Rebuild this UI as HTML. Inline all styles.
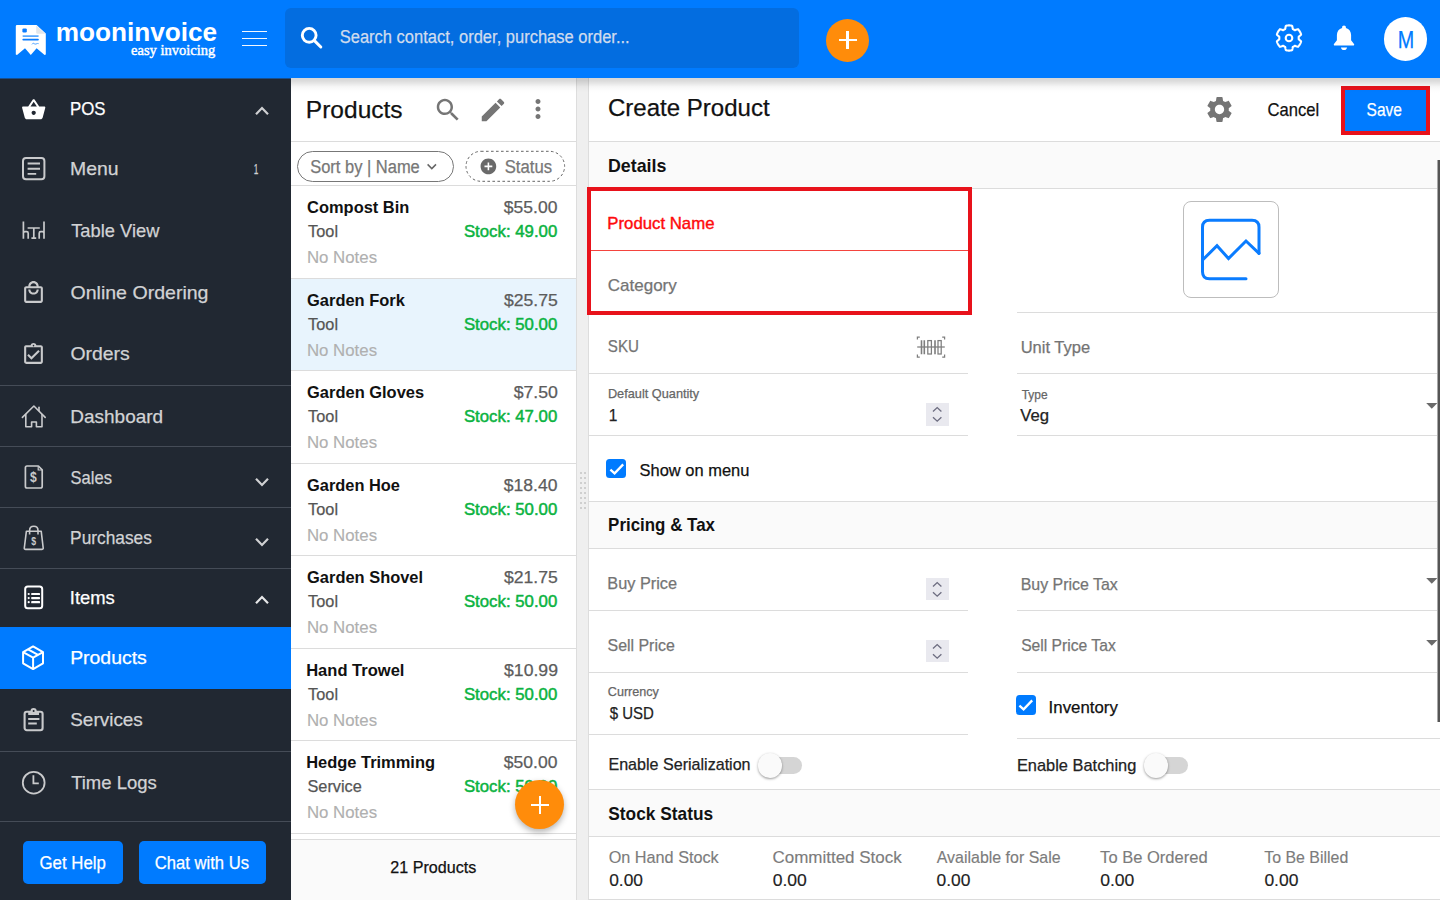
<!DOCTYPE html>
<html lang="en"><head><meta charset="utf-8"><title>Moon Invoice - Create Product</title>
<style>
html,body{margin:0;padding:0;background:#fff;}
body{width:1440px;height:900px;overflow:hidden;position:relative;font-family:'Liberation Sans',sans-serif;}
#app{position:absolute;left:0;top:0;width:1440px;height:900px;overflow:hidden;}
.t{position:absolute;white-space:nowrap;transform-origin:0 0;line-height:1;-webkit-text-stroke-width:.25px;}
</style></head><body><div id="app">
<div style="position:absolute;left:0px;top:78px;width:291px;height:822px;background:#212832"></div>
<div style="position:absolute;left:0px;top:385px;width:291px;height:1px;background:#454c57"></div>
<div style="position:absolute;left:0px;top:446px;width:291px;height:1px;background:#454c57"></div>
<div style="position:absolute;left:0px;top:507px;width:291px;height:1px;background:#454c57"></div>
<div style="position:absolute;left:0px;top:568px;width:291px;height:1px;background:#454c57"></div>
<div style="position:absolute;left:0px;top:751px;width:291px;height:1px;background:#454c57"></div>
<div style="position:absolute;left:0px;top:821px;width:291px;height:1px;background:#454c57"></div>
<div style="position:absolute;left:0px;top:627px;width:291px;height:62px;background:#007bff"></div>
<svg style="position:absolute;left:21.000000000000004px;top:96.5px;" width="25.4" height="25.4" viewBox="0 0 24 24"><path fill="#fff" d="M17.21 9l-4.38-6.56c-.19-.28-.51-.42-.83-.42-.32 0-.64.14-.83.43L6.79 9H2c-.55 0-1 .45-1 1 0 .09.01.18.04.27l2.54 9.27c.23.84 1 1.46 1.92 1.46h13c.92 0 1.69-.62 1.93-1.46l2.54-9.27L23 10c0-.55-.45-1-1-1h-4.79zM9 9l3-4.4L15 9H9zm3 8c-1.1 0-2-.9-2-2s.9-2 2-2 2 .9 2 2-.9 2-2 2z"/></svg>
<span class="t" style="left:69px;top:99px;font:400 19px/1 'Liberation Sans',sans-serif;color:#fff;transform:translateX(0.97px) scaleX(0.8867);">POS</span>
<svg style="position:absolute;left:252px;top:101.2px;" width="20" height="20" viewBox="-10 -10 20 20"><path d="M-6 3.2 L0 -3 L6 3.2" fill="none" stroke="#d0d1d3" stroke-width="2.2"/></svg>
<svg style="position:absolute;left:20px;top:155px;" width="28" height="28" viewBox="0 0 28 28"><rect x="3" y="3" width="21.4" height="21.2" rx="3" fill="none" stroke="#c9cacc" stroke-width="2"/><path d="M7.6 8.5 H20 M7.6 13.7 H20 M7.6 18.9 H16.2" stroke="#c9cacc" stroke-width="1.9"/></svg>
<span class="t" style="left:70px;top:159px;font:400 19px/1 'Liberation Sans',sans-serif;color:#d2d3d5;transform:translateX(0.07px) scaleX(1.0216);">Menu</span>
<span class="t" style="left:253px;top:162px;font:400 14px/1 'Liberation Sans',sans-serif;color:#d2d3d5;transform:translateX(0.67px) scaleX(0.5913);">1</span>
<svg style="position:absolute;left:20px;top:218px;" width="28" height="24" viewBox="0 0 28 24"><g fill="none" stroke="#c9cacc" stroke-width="1.7"><path d="M3.4 3.6 V20.8 M3.4 15 Q3.4 13.6 5 13.6 H6.6 Q8.2 13.6 8.2 15.2 V20.8"/><path d="M24 3.6 V20.8 M24 15 Q24 13.6 22.4 13.6 H20.8 Q19.2 13.6 19.2 15.2 V20.8"/><path d="M7.6 10 H19.8 M13.8 10 V20 M11.4 20.2 H16.2"/></g></svg>
<span class="t" style="left:71px;top:221px;font:400 19px/1 'Liberation Sans',sans-serif;color:#d2d3d5;transform:translateX(0.19px) scaleX(0.9640);">Table View</span>
<svg style="position:absolute;left:21.1px;top:279.5px;" width="25" height="25" viewBox="0 0 24 24"><path fill="#c9cacc" d="M19 6h-2c0-2.76-2.24-5-5-5S7 3.24 7 6H5c-1.1 0-2 .9-2 2v12c0 1.1.9 2 2 2h14c1.1 0 2-.9 2-2V8c0-1.1-.9-2-2-2zm-7-3c1.66 0 3 1.34 3 3H9c0-1.66 1.34-3 3-3zm7 17H5V8h14v12zm-7-8c-1.66 0-3-1.34-3-3H7c0 2.76 2.24 5 5 5s5-2.24 5-5h-2c0 1.66-1.34 3-3 3z"/></svg>
<span class="t" style="left:70px;top:283px;font:400 19px/1 'Liberation Sans',sans-serif;color:#d2d3d5;transform:translateX(0.46px) scaleX(1.0292);">Online Ordering</span>
<svg style="position:absolute;left:21.1px;top:341.5px;" width="25" height="25" viewBox="0 0 24 24"><path fill="#c9cacc" d="M18 9l-1.41-1.42L10 14.17l-2.59-2.58L6 13l4 4zm1-6h-4.18C14.4 1.84 13.3 1 12 1c-1.3 0-2.4.84-2.82 2H5c-.14 0-.27.01-.4.04-.39.08-.74.28-1.01.55-.18.18-.33.4-.43.64-.1.23-.16.49-.16.77v14c0 .27.06.54.16.78s.25.45.43.64c.27.27.62.47 1.01.55.13.02.26.03.4.03h14c1.1 0 2-.9 2-2V5c0-1.1-.9-2-2-2zm-7-.25c.41 0 .75.34.75.75s-.34.75-.75.75-.75-.34-.75-.75.34-.75.75-.75zM19 19H5V5h14v14z"/></svg>
<span class="t" style="left:70px;top:344px;font:400 19px/1 'Liberation Sans',sans-serif;color:#d2d3d5;transform:translateX(0.46px) scaleX(1.0216);">Orders</span>
<svg style="position:absolute;left:20px;top:402px;" width="28" height="28" viewBox="0 0 28 28"><g fill="none" stroke="#c9cacc" stroke-width="1.6" stroke-linejoin="round" stroke-linecap="round"><path d="M2.4 15.4 L13.9 4 L25.2 15.4"/><path d="M5.8 12.6 V24.8 H11.6 V20 H16.4 V24.8 H22 V12.6"/><path d="M19 5.2 V8.6"/></g></svg>
<span class="t" style="left:70px;top:407px;font:400 19px/1 'Liberation Sans',sans-serif;color:#d2d3d5;transform:translateX(0.25px) scaleX(0.9994);">Dashboard</span>
<svg style="position:absolute;left:20px;top:462px;" width="28" height="30" viewBox="0 0 28 30"><path d="M7 4 H18.4 L22.2 7.8 V24.2 Q22.2 26 20.4 26 H7 Q5.4 26 5.4 24.2 V5.8 Q5.4 4 7 4Z" fill="none" stroke="#c9cacc" stroke-width="1.7" stroke-linejoin="round"/><path d="M18.2 4.2 V8 H22" fill="none" stroke="#c9cacc" stroke-width="1.2"/></svg>
<span class="t" style="left:30px;top:470px;font:700 14.5px/1 'Liberation Sans',sans-serif;color:#c9cacc;transform:translateX(0.04px) scaleX(0.8344);-webkit-text-stroke-width:0;">$</span>
<span class="t" style="left:70px;top:468px;font:400 19px/1 'Liberation Sans',sans-serif;color:#d2d3d5;transform:translateX(0.52px) scaleX(0.8714);">Sales</span>
<svg style="position:absolute;left:252px;top:471.6px;" width="20" height="20" viewBox="-10 -10 20 20"><path d="M-6 -3.2 L0 3 L6 -3.2" fill="none" stroke="#d0d1d3" stroke-width="2.2"/></svg>
<svg style="position:absolute;left:20px;top:522px;" width="28" height="30" viewBox="0 0 28 30"><g fill="none" stroke="#c9cacc" stroke-width="1.6" stroke-linejoin="round"><path d="M6.4 9.2 H21.2 L23.2 26 Q23.3 27.4 21.8 27.4 H5.6 Q4.2 27.4 4.3 26Z"/><path d="M9.6 12.6 V8.4 Q9.6 4.2 13.8 4.2 Q18 4.2 18 8.4 V12.6"/></g></svg>
<span class="t" style="left:31px;top:536px;font:700 11px/1 'Liberation Sans',sans-serif;color:#c9cacc;transform:translateX(0.33px) scaleX(0.7894);-webkit-text-stroke-width:0;">$</span>
<span class="t" style="left:70px;top:528px;font:400 19px/1 'Liberation Sans',sans-serif;color:#d2d3d5;transform:translateX(0.09px) scaleX(0.9110);">Purchases</span>
<svg style="position:absolute;left:252px;top:532px;" width="20" height="20" viewBox="-10 -10 20 20"><path d="M-6 -3.2 L0 3 L6 -3.2" fill="none" stroke="#d0d1d3" stroke-width="2.2"/></svg>
<svg style="position:absolute;left:20px;top:582px;" width="28" height="30" viewBox="0 0 28 30"><rect x="5.2" y="4.5" width="17" height="21.8" rx="2.6" fill="none" stroke="#fff" stroke-width="2"/><g fill="#fff"><rect x="11.2" y="10.9" width="8.8" height="2.2" rx=".6"/><rect x="11.2" y="15" width="8.8" height="2.2" rx=".6"/><rect x="11.2" y="19.1" width="8.8" height="2.2" rx=".6"/><circle cx="8.7" cy="12" r="1.1"/><circle cx="8.7" cy="16.1" r="1.1"/><circle cx="8.7" cy="20.2" r="1.1"/></g></svg>
<span class="t" style="left:69px;top:588px;font:400 19px/1 'Liberation Sans',sans-serif;color:#fff;transform:translateX(0.77px) scaleX(0.9690);">Items</span>
<svg style="position:absolute;left:252px;top:589.6px;" width="20" height="20" viewBox="-10 -10 20 20"><path d="M-6 3.2 L0 -3 L6 3.2" fill="none" stroke="#e6e7e8" stroke-width="2.2"/></svg>
<svg style="position:absolute;left:19px;top:643px;" width="28" height="30" viewBox="0 0 28 30"><g fill="none" stroke="#fff" stroke-width="2" stroke-linejoin="round"><path d="M14.1 3.4 L24 9.2 V20.3 L14.1 26.1 L4.1 20.3 V9.2Z"/><path d="M4.1 9.2 L14.1 14.6 L24 9.2 M14.1 14.6 V26.1"/><path d="M9.1 6.3 L19 11.9"/></g></svg>
<span class="t" style="left:70px;top:648px;font:400 19px/1 'Liberation Sans',sans-serif;color:#fff;transform:translateX(0.16px) scaleX(1.0214);">Products</span>
<svg style="position:absolute;left:20px;top:706px;" width="28" height="28" viewBox="0 0 28 28"><rect x="4.6" y="5.8" width="18" height="18.4" rx="2.2" fill="none" stroke="#c9cacc" stroke-width="2.1"/><rect x="8.2" y="5" width="10.8" height="4" fill="#c9cacc"/><circle cx="13.6" cy="5.2" r="3.1" fill="#c9cacc"/><circle cx="13.6" cy="5" r="1" fill="#212832"/><path d="M8.2 12.9 H19.4 M8.2 17.5 H16.8" stroke="#c9cacc" stroke-width="2"/></svg>
<span class="t" style="left:70px;top:710px;font:400 19px/1 'Liberation Sans',sans-serif;color:#d2d3d5;transform:translateX(0.24px) scaleX(0.9965);">Services</span>
<svg style="position:absolute;left:20px;top:769px;" width="28" height="28" viewBox="0 0 28 28"><circle cx="13.7" cy="13.7" r="10.9" fill="none" stroke="#c9cacc" stroke-width="1.8"/><path d="M13.4 6.2 V14.4 H18.8" fill="none" stroke="#c9cacc" stroke-width="1.8"/></svg>
<span class="t" style="left:71px;top:773px;font:400 19px/1 'Liberation Sans',sans-serif;color:#d2d3d5;transform:translateX(0.15px) scaleX(0.9736);">Time Logs</span>
<div style="position:absolute;left:22.5px;top:841.3px;width:100px;height:43px;background:#007bff;border-radius:5px"></div>
<span class="t" style="left:39px;top:853px;font:400 19px/1 'Liberation Sans',sans-serif;color:#fff;transform:translateX(0.46px) scaleX(0.8862);">Get Help</span>
<div style="position:absolute;left:139.2px;top:841.3px;width:126.5px;height:43px;background:#007bff;border-radius:5px"></div>
<span class="t" style="left:154px;top:853px;font:400 19px/1 'Liberation Sans',sans-serif;color:#fff;transform:translateX(0.82px) scaleX(0.8739);">Chat with Us</span>
<div style="position:absolute;left:291px;top:78px;width:285px;height:822px;background:#fff"></div>
<span class="t" style="left:305px;top:98px;font:400 24.5px/1 'Liberation Sans',sans-serif;color:#111;transform:translateX(0.82px) scaleX(1.0014);">Products</span>
<svg style="position:absolute;left:432.5px;top:94.8px;" width="30" height="30" viewBox="0 0 24 24"><path fill="#757575" d="M15.5 14h-.79l-.28-.27C15.41 12.59 16 11.11 16 9.5 16 5.91 13.09 3 9.5 3S3 5.91 3 9.5 5.91 16 9.5 16c1.61 0 3.09-.59 4.23-1.57l.27.28v.79l5 4.99L20.49 19l-4.99-5zm-6 0C7.01 14 5 11.99 5 9.5S7.01 5 9.5 5 14 7.01 14 9.5 11.99 14 9.5 14z"/></svg>
<svg style="position:absolute;left:478.0px;top:94.6px;" width="30" height="30" viewBox="0 0 24 24"><path fill="#757575" d="M3 17.25V21h3.75L17.81 9.94l-3.75-3.75L3 17.25zM20.71 7.04c.39-.39.39-1.02 0-1.41l-2.34-2.34c-.39-.39-1.02-.39-1.41 0l-1.83 1.83 3.75 3.75 1.83-1.83z"/></svg>
<svg style="position:absolute;left:523.2px;top:94.4px;" width="30" height="30" viewBox="0 0 24 24"><path fill="#757575" d="M12 8c1.1 0 2-.9 2-2s-.9-2-2-2-2 .9-2 2 .9 2 2 2zm0 2c-1.1 0-2 .9-2 2s.9 2 2 2 2-.9 2-2-.9-2-2-2zm0 6c-1.1 0-2 .9-2 2s.9 2 2 2 2-.9 2-2-.9-2-2-2z"/></svg>
<div style="position:absolute;left:291px;top:141px;width:285px;height:1px;background:#dcdcdc"></div>
<div style="position:absolute;left:296.8px;top:150.8px;width:157px;height:31px;border:1px solid #777;border-radius:16px;box-sizing:border-box"></div>
<span class="t" style="left:310px;top:158px;font:400 18px/1 'Liberation Sans',sans-serif;color:#777;transform:translateX(0.17px) scaleX(0.9156);">Sort by | Name</span>
<svg style="position:absolute;left:424px;top:160px;" width="16" height="14" viewBox="0 0 16 14"><path d="M3.6 4.4 L7.8 8.6 L12 4.4" fill="none" stroke="#666" stroke-width="1.5"/></svg>
<svg style="position:absolute;left:465px;top:150px;" width="101" height="33" viewBox="0 0 101 33"><rect x="1" y="1.3" width="98.6" height="30" rx="15" fill="none" stroke="#666" stroke-width="1" stroke-dasharray="2.6 2.4"/></svg>
<svg style="position:absolute;left:479.1px;top:157.29999999999998px;" width="18.8" height="18.8" viewBox="0 0 24 24"><path fill="#6a6a6a" d="M12 2C6.48 2 2 6.48 2 12s4.48 10 10 10 10-4.48 10-10S17.52 2 12 2zm5 11h-4v4h-2v-4H7v-2h4V7h2v4h4v2z"/></svg>
<span class="t" style="left:504px;top:158px;font:400 18px/1 'Liberation Sans',sans-serif;color:#777;transform:translateX(0.70px) scaleX(0.9271);">Status</span>
<div style="position:absolute;left:291px;top:184.5px;width:285px;height:1px;background:#dcdcdc"></div>
<span class="t" style="left:307px;top:199px;font:700 17px/1 'Liberation Sans',sans-serif;color:#111;transform:translateX(0.07px) scaleX(0.9670);-webkit-text-stroke-width:0;">Compost Bin</span>
<span class="t" style="left:503px;top:199px;font:400 17px/1 'Liberation Sans',sans-serif;color:#5c5c5c;transform:translateX(0.81px) scaleX(1.0306);">$55.00</span>
<span class="t" style="left:308px;top:223px;font:400 17px/1 'Liberation Sans',sans-serif;color:#555;transform:translateX(0.10px) scaleX(0.9587);">Tool</span>
<span class="t" style="left:463px;top:223px;font:400 17px/1 'Liberation Sans',sans-serif;color:#0bb341;transform:translateX(0.90px) scaleX(0.9877);-webkit-text-stroke-width:.5px;">Stock: 49.00</span>
<span class="t" style="left:306px;top:249px;font:400 17px/1 'Liberation Sans',sans-serif;color:#b0b0b0;transform:translateX(0.94px) scaleX(0.9893);-webkit-text-stroke-width:.15px;">No Notes</span>
<div style="position:absolute;left:291px;top:278px;width:285px;height:1px;background:#dcdcdc"></div>
<div style="position:absolute;left:291px;top:279px;width:285px;height:92px;background:#e8f4fd"></div>
<span class="t" style="left:307px;top:292px;font:700 17px/1 'Liberation Sans',sans-serif;color:#111;transform:translateX(0.06px) scaleX(0.9680);-webkit-text-stroke-width:0;">Garden Fork</span>
<span class="t" style="left:504px;top:292px;font:400 17px/1 'Liberation Sans',sans-serif;color:#5c5c5c;transform:translateX(0.02px) scaleX(1.0347);">$25.75</span>
<span class="t" style="left:308px;top:316px;font:400 17px/1 'Liberation Sans',sans-serif;color:#555;transform:translateX(0.10px) scaleX(0.9587);">Tool</span>
<span class="t" style="left:463px;top:316px;font:400 17px/1 'Liberation Sans',sans-serif;color:#0bb341;transform:translateX(0.90px) scaleX(0.9877);-webkit-text-stroke-width:.5px;">Stock: 50.00</span>
<span class="t" style="left:306px;top:342px;font:400 17px/1 'Liberation Sans',sans-serif;color:#b0b0b0;transform:translateX(0.94px) scaleX(0.9893);-webkit-text-stroke-width:.15px;">No Notes</span>
<div style="position:absolute;left:291px;top:370px;width:285px;height:1px;background:#dcdcdc"></div>
<span class="t" style="left:307px;top:384px;font:700 17px/1 'Liberation Sans',sans-serif;color:#111;transform:translateX(0.07px) scaleX(0.9679);-webkit-text-stroke-width:0;">Garden Gloves</span>
<span class="t" style="left:513px;top:384px;font:400 17px/1 'Liberation Sans',sans-serif;color:#5c5c5c;transform:translateX(0.64px) scaleX(1.0414);">$7.50</span>
<span class="t" style="left:308px;top:408px;font:400 17px/1 'Liberation Sans',sans-serif;color:#555;transform:translateX(0.10px) scaleX(0.9587);">Tool</span>
<span class="t" style="left:463px;top:408px;font:400 17px/1 'Liberation Sans',sans-serif;color:#0bb341;transform:translateX(0.90px) scaleX(0.9877);-webkit-text-stroke-width:.5px;">Stock: 47.00</span>
<span class="t" style="left:306px;top:434px;font:400 17px/1 'Liberation Sans',sans-serif;color:#b0b0b0;transform:translateX(0.94px) scaleX(0.9893);-webkit-text-stroke-width:.15px;">No Notes</span>
<div style="position:absolute;left:291px;top:463px;width:285px;height:1px;background:#dcdcdc"></div>
<span class="t" style="left:307px;top:477px;font:700 17px/1 'Liberation Sans',sans-serif;color:#111;transform:translateX(0.07px) scaleX(0.9641);-webkit-text-stroke-width:0;">Garden Hoe</span>
<span class="t" style="left:503px;top:477px;font:400 17px/1 'Liberation Sans',sans-serif;color:#5c5c5c;transform:translateX(0.81px) scaleX(1.0306);">$18.40</span>
<span class="t" style="left:308px;top:501px;font:400 17px/1 'Liberation Sans',sans-serif;color:#555;transform:translateX(0.10px) scaleX(0.9587);">Tool</span>
<span class="t" style="left:463px;top:501px;font:400 17px/1 'Liberation Sans',sans-serif;color:#0bb341;transform:translateX(0.90px) scaleX(0.9877);-webkit-text-stroke-width:.5px;">Stock: 50.00</span>
<span class="t" style="left:306px;top:527px;font:400 17px/1 'Liberation Sans',sans-serif;color:#b0b0b0;transform:translateX(0.94px) scaleX(0.9893);-webkit-text-stroke-width:.15px;">No Notes</span>
<div style="position:absolute;left:291px;top:555px;width:285px;height:1px;background:#dcdcdc"></div>
<span class="t" style="left:307px;top:569px;font:700 17px/1 'Liberation Sans',sans-serif;color:#111;transform:translateX(0.07px) scaleX(0.9667);-webkit-text-stroke-width:0;">Garden Shovel</span>
<span class="t" style="left:504px;top:569px;font:400 17px/1 'Liberation Sans',sans-serif;color:#5c5c5c;transform:translateX(0.02px) scaleX(1.0347);">$21.75</span>
<span class="t" style="left:308px;top:593px;font:400 17px/1 'Liberation Sans',sans-serif;color:#555;transform:translateX(0.10px) scaleX(0.9587);">Tool</span>
<span class="t" style="left:463px;top:593px;font:400 17px/1 'Liberation Sans',sans-serif;color:#0bb341;transform:translateX(0.90px) scaleX(0.9877);-webkit-text-stroke-width:.5px;">Stock: 50.00</span>
<span class="t" style="left:306px;top:619px;font:400 17px/1 'Liberation Sans',sans-serif;color:#b0b0b0;transform:translateX(0.94px) scaleX(0.9893);-webkit-text-stroke-width:.15px;">No Notes</span>
<div style="position:absolute;left:291px;top:648px;width:285px;height:1px;background:#dcdcdc"></div>
<span class="t" style="left:306px;top:662px;font:700 17px/1 'Liberation Sans',sans-serif;color:#111;transform:translateX(0.16px) scaleX(0.9721);-webkit-text-stroke-width:0;">Hand Trowel</span>
<span class="t" style="left:504px;top:662px;font:400 17px/1 'Liberation Sans',sans-serif;color:#5c5c5c;transform:translateX(0.03px) scaleX(1.0366);">$10.99</span>
<span class="t" style="left:308px;top:686px;font:400 17px/1 'Liberation Sans',sans-serif;color:#555;transform:translateX(0.10px) scaleX(0.9587);">Tool</span>
<span class="t" style="left:463px;top:686px;font:400 17px/1 'Liberation Sans',sans-serif;color:#0bb341;transform:translateX(0.90px) scaleX(0.9877);-webkit-text-stroke-width:.5px;">Stock: 50.00</span>
<span class="t" style="left:306px;top:712px;font:400 17px/1 'Liberation Sans',sans-serif;color:#b0b0b0;transform:translateX(0.94px) scaleX(0.9893);-webkit-text-stroke-width:.15px;">No Notes</span>
<div style="position:absolute;left:291px;top:740px;width:285px;height:1px;background:#dcdcdc"></div>
<span class="t" style="left:306px;top:754px;font:700 17px/1 'Liberation Sans',sans-serif;color:#111;transform:translateX(0.17px) scaleX(0.9674);-webkit-text-stroke-width:0;">Hedge Trimming</span>
<span class="t" style="left:503px;top:754px;font:400 17px/1 'Liberation Sans',sans-serif;color:#5c5c5c;transform:translateX(0.81px) scaleX(1.0306);">$50.00</span>
<span class="t" style="left:307px;top:778px;font:400 17px/1 'Liberation Sans',sans-serif;color:#555;transform:translateX(0.48px) scaleX(0.9579);">Service</span>
<span class="t" style="left:463px;top:778px;font:400 17px/1 'Liberation Sans',sans-serif;color:#0bb341;transform:translateX(0.90px) scaleX(0.9877);-webkit-text-stroke-width:.5px;">Stock: 50.00</span>
<span class="t" style="left:306px;top:804px;font:400 17px/1 'Liberation Sans',sans-serif;color:#b0b0b0;transform:translateX(0.94px) scaleX(0.9893);-webkit-text-stroke-width:.15px;">No Notes</span>
<div style="position:absolute;left:291px;top:833px;width:285px;height:1px;background:#dcdcdc"></div>
<div style="position:absolute;left:291px;top:839px;width:285px;height:1px;background:#dcdcdc"></div>
<div style="position:absolute;left:291px;top:840px;width:285px;height:60px;background:#fafafa"></div>
<span class="t" style="left:390px;top:859px;font:400 17px/1 'Liberation Sans',sans-serif;color:#111;transform:translateX(0.36px) scaleX(0.9475);">21 Products</span>
<div style="position:absolute;left:514.8px;top:779.8px;width:49px;height:49px;background:#ff8c0a;border-radius:50%;box-shadow:0 3px 6px rgba(0,0,0,.3)"></div>
<div style="position:absolute;left:530.8px;top:803.8px;width:17.8px;height:2.5px;background:#fff"></div>
<div style="position:absolute;left:538.5px;top:796.1px;width:2.5px;height:17.8px;background:#fff"></div>
<div style="position:absolute;left:576px;top:78px;width:13px;height:822px;background:#efefef;border-left:1px solid #ddd;border-right:1px solid #ddd;box-sizing:border-box"></div>
<div style="position:absolute;left:580.2px;top:472.2px;width:2.1px;height:2.1px;background:#cfcfcf"></div>
<div style="position:absolute;left:583.9px;top:472.2px;width:2.1px;height:2.1px;background:#cfcfcf"></div>
<div style="position:absolute;left:580.2px;top:477.13px;width:2.1px;height:2.1px;background:#cfcfcf"></div>
<div style="position:absolute;left:583.9px;top:477.13px;width:2.1px;height:2.1px;background:#cfcfcf"></div>
<div style="position:absolute;left:580.2px;top:482.06px;width:2.1px;height:2.1px;background:#cfcfcf"></div>
<div style="position:absolute;left:583.9px;top:482.06px;width:2.1px;height:2.1px;background:#cfcfcf"></div>
<div style="position:absolute;left:580.2px;top:486.99px;width:2.1px;height:2.1px;background:#cfcfcf"></div>
<div style="position:absolute;left:583.9px;top:486.99px;width:2.1px;height:2.1px;background:#cfcfcf"></div>
<div style="position:absolute;left:580.2px;top:491.91999999999996px;width:2.1px;height:2.1px;background:#cfcfcf"></div>
<div style="position:absolute;left:583.9px;top:491.91999999999996px;width:2.1px;height:2.1px;background:#cfcfcf"></div>
<div style="position:absolute;left:580.2px;top:496.84999999999997px;width:2.1px;height:2.1px;background:#cfcfcf"></div>
<div style="position:absolute;left:583.9px;top:496.84999999999997px;width:2.1px;height:2.1px;background:#cfcfcf"></div>
<div style="position:absolute;left:580.2px;top:501.78px;width:2.1px;height:2.1px;background:#cfcfcf"></div>
<div style="position:absolute;left:583.9px;top:501.78px;width:2.1px;height:2.1px;background:#cfcfcf"></div>
<div style="position:absolute;left:580.2px;top:506.71px;width:2.1px;height:2.1px;background:#cfcfcf"></div>
<div style="position:absolute;left:583.9px;top:506.71px;width:2.1px;height:2.1px;background:#cfcfcf"></div>
<div style="position:absolute;left:589px;top:78px;width:851px;height:822px;background:#fff"></div>
<span class="t" style="left:607px;top:96px;font:400 24.5px/1 'Liberation Sans',sans-serif;color:#111;transform:translateX(0.90px) scaleX(0.9817);">Create Product</span>
<svg style="position:absolute;left:1204.2px;top:94.0px;" width="31" height="31" viewBox="0 0 24 24"><path fill="#757575" d="M19.14 12.94c.04-.3.06-.61.06-.94 0-.32-.02-.64-.07-.94l2.03-1.58c.18-.14.23-.41.12-.61l-1.92-3.32c-.12-.22-.37-.29-.59-.22l-2.39.96c-.5-.38-1.03-.7-1.62-.94l-.36-2.54c-.04-.24-.24-.41-.48-.41h-3.84c-.24 0-.43.17-.47.41l-.36 2.54c-.59.24-1.13.57-1.62.94l-2.39-.96c-.22-.08-.47 0-.59.22L2.74 8.87c-.12.21-.08.47.12.61l2.03 1.58c-.05.3-.09.63-.09.94s.02.64.07.94l-2.03 1.58c-.18.14-.23.41-.12.61l1.92 3.32c.12.22.37.29.59.22l2.39-.96c.5.38 1.03.7 1.62.94l.36 2.54c.05.24.24.41.48.41h3.84c.24 0 .44-.17.47-.41l.36-2.54c.59-.24 1.13-.56 1.62-.94l2.39.96c.22.08.47 0 .59-.22l1.92-3.32c.12-.22.07-.47-.12-.61l-2.01-1.58zM12 15.6c-1.98 0-3.6-1.62-3.6-3.6s1.620-3.6 3.6-3.6 3.6 1.62 3.6 3.6-1.62 3.6-3.600 3.600z"/></svg>
<span class="t" style="left:1267px;top:100px;font:400 19px/1 'Liberation Sans',sans-serif;color:#111;transform:translateX(0.47px) scaleX(0.8728);">Cancel</span>
<div style="position:absolute;left:1341px;top:86px;width:89px;height:48.5px;background:#007bff;border:4px solid #e8121b;box-sizing:border-box"></div>
<span class="t" style="left:1366px;top:100px;font:400 19px/1 'Liberation Sans',sans-serif;color:#fff;transform:translateX(0.61px) scaleX(0.8164);">Save</span>
<div style="position:absolute;left:589px;top:141px;width:851px;height:1px;background:#dcdcdc"></div>
<div style="position:absolute;left:589px;top:142px;width:851px;height:46px;background:#fafafa"></div>
<div style="position:absolute;left:589px;top:141px;width:851px;height:1px;background:#dcdcdc"></div>
<div style="position:absolute;left:589px;top:188px;width:851px;height:1px;background:#dcdcdc"></div>
<span class="t" style="left:607px;top:156px;font:700 19px/1 'Liberation Sans',sans-serif;color:#111;transform:translateX(0.97px) scaleX(0.9378);-webkit-text-stroke-width:0;">Details</span>
<div style="position:absolute;left:589px;top:502px;width:851px;height:46px;background:#fafafa"></div>
<div style="position:absolute;left:589px;top:501px;width:851px;height:1px;background:#dcdcdc"></div>
<div style="position:absolute;left:589px;top:548px;width:851px;height:1px;background:#dcdcdc"></div>
<span class="t" style="left:608px;top:515px;font:700 19px/1 'Liberation Sans',sans-serif;color:#111;transform:translateX(0.12px) scaleX(0.8901);-webkit-text-stroke-width:0;">Pricing &amp; Tax</span>
<div style="position:absolute;left:589px;top:790px;width:851px;height:46px;background:#fafafa"></div>
<div style="position:absolute;left:589px;top:789px;width:851px;height:1px;background:#dcdcdc"></div>
<div style="position:absolute;left:589px;top:836px;width:851px;height:1px;background:#dcdcdc"></div>
<span class="t" style="left:608px;top:804px;font:700 19px/1 'Liberation Sans',sans-serif;color:#111;transform:translateX(0.30px) scaleX(0.9105);-webkit-text-stroke-width:0;">Stock Status</span>
<div style="position:absolute;left:587px;top:187px;width:385px;height:127.5px;border:4px solid #e8121b;box-sizing:border-box;background:#fff"></div>
<div style="position:absolute;left:591px;top:250px;width:377px;height:1px;background:#f4443e"></div>
<span class="t" style="left:607px;top:215px;font:400 17px/1 'Liberation Sans',sans-serif;color:#fe0a0c;transform:translateX(0.33px) scaleX(0.9859);-webkit-text-stroke-width:.4px;">Product Name</span>
<span class="t" style="left:607px;top:277px;font:400 17px/1 'Liberation Sans',sans-serif;color:#747474;transform:translateX(0.75px) scaleX(1.0006);">Category</span>
<div style="position:absolute;left:589px;top:373px;width:379px;height:1px;background:#dcdcdc"></div>
<div style="position:absolute;left:589px;top:435px;width:379px;height:1px;background:#dcdcdc"></div>
<div style="position:absolute;left:589px;top:610px;width:379px;height:1px;background:#dcdcdc"></div>
<div style="position:absolute;left:589px;top:672px;width:379px;height:1px;background:#dcdcdc"></div>
<div style="position:absolute;left:589px;top:733.5px;width:379px;height:1px;background:#dcdcdc"></div>
<span class="t" style="left:607px;top:338px;font:400 17px/1 'Liberation Sans',sans-serif;color:#747474;transform:translateX(0.79px) scaleX(0.8910);">SKU</span>
<svg style="position:absolute;left:915px;top:334px;" width="32" height="26" viewBox="0 0 32 26"><g fill="none" stroke="#7e7e7e" stroke-width="1.25"><path d="M2.4 5.6 V3.2 H4.8 M27.2 3.2 H29.6 V5.6 M29.6 20.6 V23 H27.2 M4.8 23 H2.4 V20.6"/><path d="M2.2 13 H29.8" /><path d="M6.5 6.3 V20.3 M9.3 6.3 V20.3 M20 6.3 V20.3" stroke-width="1.6"/><rect x="12.8" y="6.6" width="3.6" height="13.4"/><rect x="23" y="6.6" width="3.2" height="13.4"/></g></svg>
<span class="t" style="left:607px;top:387px;font:400 13px/1 'Liberation Sans',sans-serif;color:#666;transform:translateX(0.92px) scaleX(0.9796);">Default Quantity</span>
<span class="t" style="left:608px;top:407px;font:400 17px/1 'Liberation Sans',sans-serif;color:#222;transform:translateX(0.68px) scaleX(0.9138);">1</span>
<div style="position:absolute;left:926.4px;top:403.2px;width:22.4px;height:22.6px;background:#e9e9ef"></div>
<svg style="position:absolute;left:926.4px;top:403.2px;" width="22.4" height="22.6" viewBox="0 0 22.4 22.6"><path d="M7 8.4 L11.2 4.6 L15.4 8.4 M7 14.3 L11.2 18.2 L15.4 14.3" fill="none" stroke="#6d6d80" stroke-width="1.35"/></svg>
<div style="position:absolute;left:926.4px;top:577.8px;width:22.4px;height:22.6px;background:#e9e9ef"></div>
<svg style="position:absolute;left:926.4px;top:577.8px;" width="22.4" height="22.6" viewBox="0 0 22.4 22.6"><path d="M7 8.4 L11.2 4.6 L15.4 8.4 M7 14.3 L11.2 18.2 L15.4 14.3" fill="none" stroke="#6d6d80" stroke-width="1.35"/></svg>
<div style="position:absolute;left:926.4px;top:639.6px;width:22.4px;height:22.6px;background:#e9e9ef"></div>
<svg style="position:absolute;left:926.4px;top:639.6px;" width="22.4" height="22.6" viewBox="0 0 22.4 22.6"><path d="M7 8.4 L11.2 4.6 L15.4 8.4 M7 14.3 L11.2 18.2 L15.4 14.3" fill="none" stroke="#6d6d80" stroke-width="1.35"/></svg>
<div style="position:absolute;left:606.4px;top:458.8px;width:19.8px;height:19.7px;background:#007bff;border-radius:3.5px"></div>
<svg style="position:absolute;left:606.6px;top:459px;" width="19.6" height="19.4" viewBox="0 0 19.6 19.4"><path d="M3.4 10.6 L7.6 14.4 L16.2 5.4" fill="none" stroke="#fff" stroke-width="2.3"/></svg>
<span class="t" style="left:639px;top:462px;font:400 17px/1 'Liberation Sans',sans-serif;color:#111;transform:translateX(0.59px) scaleX(0.9676);">Show on menu</span>
<span class="t" style="left:607px;top:575px;font:400 17px/1 'Liberation Sans',sans-serif;color:#747474;transform:translateX(0.29px) scaleX(0.9590);">Buy Price</span>
<span class="t" style="left:607px;top:637px;font:400 17px/1 'Liberation Sans',sans-serif;color:#747474;transform:translateX(0.53px) scaleX(0.9359);">Sell Price</span>
<span class="t" style="left:607px;top:685px;font:400 13px/1 'Liberation Sans',sans-serif;color:#666;transform:translateX(0.81px) scaleX(0.9687);">Currency</span>
<span class="t" style="left:609px;top:705px;font:400 17px/1 'Liberation Sans',sans-serif;color:#222;transform:translateX(0.76px) scaleX(0.8821);">$ USD</span>
<span class="t" style="left:608px;top:756px;font:400 17px/1 'Liberation Sans',sans-serif;color:#222;transform:translateX(0.42px) scaleX(0.9459);">Enable Serialization</span>
<div style="position:absolute;left:767.4px;top:757.1px;width:34.3px;height:16.9px;background:#d5d5d5;border-radius:9px"></div>
<div style="position:absolute;left:757.6px;top:753.1px;width:24.5px;height:24.5px;background:#fafafa;border-radius:50%;box-shadow:0 1px 2.5px rgba(0,0,0,.4)"></div>
<span class="t" style="left:608px;top:849px;font:400 17px/1 'Liberation Sans',sans-serif;color:#7c7c7c;transform:translateX(0.65px) scaleX(0.9548);-webkit-text-stroke-width:.15px;">On Hand Stock</span>
<span class="t" style="left:609px;top:872px;font:400 17px/1 'Liberation Sans',sans-serif;color:#222;transform:translateX(0.17px) scaleX(1.0205);-webkit-text-stroke-width:.15px;">0.00</span>
<span class="t" style="left:772px;top:849px;font:400 17px/1 'Liberation Sans',sans-serif;color:#7c7c7c;transform:translateX(0.44px) scaleX(0.9987);-webkit-text-stroke-width:.15px;">Committed Stock</span>
<span class="t" style="left:772px;top:872px;font:400 17px/1 'Liberation Sans',sans-serif;color:#222;transform:translateX(0.63px) scaleX(1.0316);-webkit-text-stroke-width:.15px;">0.00</span>
<span class="t" style="left:936px;top:849px;font:400 17px/1 'Liberation Sans',sans-serif;color:#7c7c7c;transform:translateX(0.78px) scaleX(0.9376);-webkit-text-stroke-width:.15px;">Available for Sale</span>
<span class="t" style="left:936px;top:872px;font:400 17px/1 'Liberation Sans',sans-serif;color:#222;transform:translateX(0.60px) scaleX(1.0237);-webkit-text-stroke-width:.15px;">0.00</span>
<span class="t" style="left:1100px;top:849px;font:400 17px/1 'Liberation Sans',sans-serif;color:#7c7c7c;transform:translateX(0.12px) scaleX(0.9725);-webkit-text-stroke-width:.15px;">To Be Ordered</span>
<span class="t" style="left:1100px;top:872px;font:400 17px/1 'Liberation Sans',sans-serif;color:#222;transform:translateX(0.19px) scaleX(1.0318);-webkit-text-stroke-width:.15px;">0.00</span>
<span class="t" style="left:1264px;top:849px;font:400 17px/1 'Liberation Sans',sans-serif;color:#7c7c7c;transform:translateX(0.27px) scaleX(0.9356);-webkit-text-stroke-width:.15px;">To Be Billed</span>
<span class="t" style="left:1264px;top:872px;font:400 17px/1 'Liberation Sans',sans-serif;color:#222;transform:translateX(0.38px) scaleX(1.0283);-webkit-text-stroke-width:.15px;">0.00</span>
<div style="position:absolute;left:589px;top:899px;width:851px;height:1px;background:#dcdcdc"></div>
<div style="position:absolute;left:1183.3px;top:201.4px;width:95.3px;height:96.8px;border:1px solid #bdbdbd;border-radius:8px;box-sizing:border-box;background:#fff"></div>
<svg style="position:absolute;left:1195px;top:212px;" width="72" height="76" viewBox="0 0 72 76"><g fill="none" stroke="#0a7cff" stroke-width="3" stroke-linejoin="round" stroke-linecap="round"><path d="M51 66.7 H14.5 Q7.5 66.7 7.5 59.7 V15.3 Q7.5 8.3 14.5 8.3 H57 Q64 8.3 64 15.3 V41.3"/><path d="M7.6 48 L22 33.7 L33.5 46.5 L51 29 L64 41.3" stroke-linejoin="miter"/></g></svg>
<div style="position:absolute;left:1017px;top:312px;width:420px;height:1px;background:#dcdcdc"></div>
<div style="position:absolute;left:1017px;top:373px;width:420px;height:1px;background:#dcdcdc"></div>
<div style="position:absolute;left:1017px;top:434.5px;width:420px;height:1px;background:#dcdcdc"></div>
<div style="position:absolute;left:1017px;top:610px;width:420px;height:1px;background:#dcdcdc"></div>
<div style="position:absolute;left:1017px;top:672px;width:420px;height:1px;background:#dcdcdc"></div>
<div style="position:absolute;left:1017px;top:737.5px;width:423px;height:1px;background:#dcdcdc"></div>
<span class="t" style="left:1020px;top:339px;font:400 17px/1 'Liberation Sans',sans-serif;color:#747474;transform:translateX(0.67px) scaleX(0.9715);">Unit Type</span>
<span class="t" style="left:1021px;top:388px;font:400 13px/1 'Liberation Sans',sans-serif;color:#666;transform:translateX(0.69px) scaleX(0.9186);">Type</span>
<span class="t" style="left:1020px;top:407px;font:400 17px/1 'Liberation Sans',sans-serif;color:#222;transform:translateX(0.25px) scaleX(0.9828);">Veg</span>
<svg style="position:absolute;left:1425px;top:402.4px;" width="14" height="8" viewBox="0 0 14 8"><path d="M1.2 1 H12.4 L6.8 6.8Z" fill="#6a6a6a"/></svg>
<svg style="position:absolute;left:1425px;top:577px;" width="14" height="8" viewBox="0 0 14 8"><path d="M1.2 1 H12.4 L6.8 6.8Z" fill="#6a6a6a"/></svg>
<svg style="position:absolute;left:1425px;top:638.7px;" width="14" height="8" viewBox="0 0 14 8"><path d="M1.2 1 H12.4 L6.8 6.8Z" fill="#6a6a6a"/></svg>
<span class="t" style="left:1020px;top:576px;font:400 17px/1 'Liberation Sans',sans-serif;color:#747474;transform:translateX(0.64px) scaleX(0.9378);">Buy Price Tax</span>
<span class="t" style="left:1021px;top:637px;font:400 17px/1 'Liberation Sans',sans-serif;color:#747474;transform:translateX(0.13px) scaleX(0.9213);">Sell Price Tax</span>
<div style="position:absolute;left:1015.8px;top:695.0999999999999px;width:19.8px;height:19.7px;background:#007bff;border-radius:3.5px"></div>
<svg style="position:absolute;left:1016px;top:695.3px;" width="19.6" height="19.4" viewBox="0 0 19.6 19.4"><path d="M3.4 10.6 L7.6 14.4 L16.2 5.4" fill="none" stroke="#fff" stroke-width="2.3"/></svg>
<span class="t" style="left:1048px;top:699px;font:400 17px/1 'Liberation Sans',sans-serif;color:#111;transform:translateX(0.62px) scaleX(0.9895);">Inventory</span>
<span class="t" style="left:1016px;top:757px;font:400 17px/1 'Liberation Sans',sans-serif;color:#222;transform:translateX(0.92px) scaleX(0.9644);">Enable Batching</span>
<div style="position:absolute;left:1153.6px;top:757.1px;width:34.3px;height:16.9px;background:#d5d5d5;border-radius:9px"></div>
<div style="position:absolute;left:1143.8px;top:753.1px;width:24.5px;height:24.5px;background:#fafafa;border-radius:50%;box-shadow:0 1px 2.5px rgba(0,0,0,.4)"></div>
<div style="position:absolute;left:1437px;top:160px;width:1px;height:562px;background:#a8a8a8"></div>
<div style="position:absolute;left:1438px;top:160px;width:2px;height:562px;background:#555"></div>
<div id="hdr" style="position:absolute;left:0;top:0;width:1440px;height:78px;background:#007bff;z-index:20">
<div style="position:absolute;left:291px;top:78px;width:1149px;height:15px;background:linear-gradient(to bottom,rgba(0,0,0,.155) 0,rgba(0,0,0,.14) 18%,rgba(0,0,0,.09) 38%,rgba(0,0,0,.035) 58%,rgba(0,0,0,.01) 80%,rgba(0,0,0,0) 100%)"></div>
<div style="position:absolute;left:0px;top:78px;width:291px;height:1px;background:#184f8e"></div>
<svg style="position:absolute;left:14px;top:23px;" width="34" height="34" viewBox="0 0 34 34"><path fill="#fff" d="M3 2 H22.6 L31.8 10.4 V31.6 L30.6 32 L22.6 25.2 L16.8 32 L11 25.2 L3 32 L1.8 31.6 V3.2 Q1.8 2 3 2Z"/><path fill="#e3e6ea" d="M22.2 2.4 L31.4 10.8 H23.6 Q22.2 10.8 22.2 9.4Z"/><rect x="8.4" y="5.4" width="4.4" height="4" rx="1.2" fill="#0a7cff"/><rect x="8.4" y="12.2" width="16.4" height="1.7" rx=".8" fill="#5aa9ff"/><rect x="8.4" y="15.8" width="16.4" height="1.7" rx=".8" fill="#0a7cff"/><path d="M18 21.4 q1.2-2 2-1 q.8 1.2 2 .6 q1.4-.8 2.6-.4" stroke="#5aa9ff" stroke-width="1" fill="none"/></svg>
<span class="t" style="left:55px;top:20px;font:700 25px/1 'Liberation Sans',sans-serif;color:#fff;transform:translateX(0.63px) scaleX(1.0478);-webkit-text-stroke-width:0;">mooninvoice</span>
<span class="t" style="left:131px;top:43px;font:400 15px/1 'Liberation Serif',serif;color:#fff;transform:translateX(0.08px) scaleX(0.9662);-webkit-text-stroke-width:.45px;">easy invoicing</span>
<div style="position:absolute;left:242px;top:31px;width:25px;height:1px;background:#f2f7ff"></div>
<div style="position:absolute;left:242px;top:38px;width:25px;height:1px;background:#f2f7ff"></div>
<div style="position:absolute;left:242px;top:45px;width:25px;height:1px;background:#f2f7ff"></div>
<div style="position:absolute;left:285px;top:8px;width:514px;height:60px;background:#036de0;border-radius:6px"></div>
<svg style="position:absolute;left:296px;top:22px;" width="30" height="30" viewBox="0 0 30 30"><circle cx="13.2" cy="13.3" r="6.9" fill="none" stroke="#fff" stroke-width="2.9"/><path d="M18.4 18.6 L24.8 25" stroke="#fff" stroke-width="3" stroke-linecap="round"/></svg>
<span class="t" style="left:339px;top:28px;font:400 18px/1 'Liberation Sans',sans-serif;color:#d0dcee;transform:translateX(0.68px) scaleX(0.9173);">Search contact, order, purchase order...</span>
<div style="position:absolute;left:826px;top:18.5px;width:43px;height:43px;background:#ff8c0a;border-radius:50%"></div>
<div style="position:absolute;left:838.6px;top:38.6px;width:18px;height:2.6px;background:#fff"></div>
<div style="position:absolute;left:846.3px;top:30.9px;width:2.6px;height:18px;background:#fff"></div>
<svg style="position:absolute;left:1273.7px;top:22.6px;" width="30" height="30" viewBox="0 0 30 30"><path d="M15.00 2.40 L15.33 2.40 L15.66 2.42 L15.99 2.44 L16.32 2.47 L16.64 2.51 L16.97 2.56 L17.30 2.61 L17.62 2.68 L17.94 2.75 L18.22 2.97 L18.37 3.62 L18.49 4.26 L18.59 4.87 L18.67 5.44 L18.75 5.96 L18.95 6.14 L19.18 6.24 L19.40 6.36 L19.63 6.48 L19.85 6.60 L20.07 6.73 L20.28 6.86 L20.49 7.01 L20.70 7.15 L20.96 7.23 L21.44 7.04 L21.98 6.83 L22.55 6.61 L23.17 6.39 L23.81 6.19 L24.14 6.33 L24.36 6.57 L24.58 6.82 L24.79 7.07 L25.00 7.33 L25.19 7.59 L25.38 7.86 L25.57 8.14 L25.74 8.42 L25.91 8.70 L26.07 8.99 L26.23 9.28 L26.37 9.58 L26.51 9.88 L26.64 10.18 L26.76 10.48 L26.88 10.79 L26.98 11.11 L27.08 11.42 L27.03 11.78 L26.54 12.23 L26.04 12.65 L25.56 13.04 L25.11 13.40 L24.71 13.72 L24.65 13.99 L24.67 14.24 L24.69 14.49 L24.70 14.75 L24.70 15.00 L24.70 15.25 L24.69 15.51 L24.67 15.76 L24.65 16.01 L24.71 16.28 L25.11 16.60 L25.56 16.96 L26.04 17.35 L26.54 17.77 L27.03 18.22 L27.08 18.58 L26.98 18.89 L26.88 19.21 L26.76 19.52 L26.64 19.82 L26.51 20.12 L26.37 20.42 L26.23 20.72 L26.07 21.01 L25.91 21.30 L25.74 21.58 L25.57 21.86 L25.38 22.14 L25.19 22.41 L25.00 22.67 L24.79 22.93 L24.58 23.18 L24.36 23.43 L24.14 23.67 L23.81 23.81 L23.17 23.61 L22.55 23.39 L21.98 23.17 L21.44 22.96 L20.96 22.77 L20.70 22.85 L20.49 22.99 L20.28 23.14 L20.07 23.27 L19.85 23.40 L19.63 23.52 L19.40 23.64 L19.18 23.76 L18.95 23.86 L18.75 24.04 L18.67 24.56 L18.59 25.13 L18.49 25.74 L18.37 26.38 L18.22 27.03 L17.94 27.25 L17.62 27.32 L17.30 27.39 L16.97 27.44 L16.64 27.49 L16.32 27.53 L15.99 27.56 L15.66 27.58 L15.33 27.60 L15.00 27.60 L14.67 27.60 L14.34 27.58 L14.01 27.56 L13.68 27.53 L13.36 27.49 L13.03 27.44 L12.70 27.39 L12.38 27.32 L12.06 27.25 L11.78 27.03 L11.63 26.38 L11.51 25.74 L11.41 25.13 L11.33 24.56 L11.25 24.04 L11.05 23.86 L10.82 23.76 L10.60 23.64 L10.37 23.52 L10.15 23.40 L9.93 23.27 L9.72 23.14 L9.51 22.99 L9.30 22.85 L9.04 22.77 L8.56 22.96 L8.02 23.17 L7.45 23.39 L6.83 23.61 L6.19 23.81 L5.86 23.67 L5.64 23.43 L5.42 23.18 L5.21 22.93 L5.00 22.67 L4.81 22.41 L4.62 22.14 L4.43 21.86 L4.26 21.58 L4.09 21.30 L3.93 21.01 L3.77 20.72 L3.63 20.42 L3.49 20.12 L3.36 19.82 L3.24 19.52 L3.12 19.21 L3.02 18.89 L2.92 18.58 L2.97 18.22 L3.46 17.77 L3.96 17.35 L4.44 16.96 L4.89 16.60 L5.29 16.28 L5.35 16.01 L5.33 15.76 L5.31 15.51 L5.30 15.25 L5.30 15.00 L5.30 14.75 L5.31 14.49 L5.33 14.24 L5.35 13.99 L5.29 13.72 L4.89 13.40 L4.44 13.04 L3.96 12.65 L3.46 12.23 L2.97 11.78 L2.92 11.42 L3.02 11.11 L3.12 10.79 L3.24 10.48 L3.36 10.18 L3.49 9.88 L3.63 9.58 L3.77 9.28 L3.93 8.99 L4.09 8.70 L4.26 8.42 L4.43 8.14 L4.62 7.86 L4.81 7.59 L5.00 7.33 L5.21 7.07 L5.42 6.82 L5.64 6.57 L5.86 6.33 L6.19 6.19 L6.83 6.39 L7.45 6.61 L8.02 6.83 L8.56 7.04 L9.04 7.23 L9.30 7.15 L9.51 7.01 L9.72 6.86 L9.93 6.73 L10.15 6.60 L10.37 6.48 L10.60 6.36 L10.82 6.24 L11.05 6.14 L11.25 5.96 L11.33 5.44 L11.41 4.87 L11.51 4.26 L11.63 3.62 L11.78 2.97 L12.06 2.75 L12.38 2.68 L12.70 2.61 L13.03 2.56 L13.36 2.51 L13.68 2.47 L14.01 2.44 L14.34 2.42 L14.67 2.40Z" fill="none" stroke="#fff" stroke-width="2.1" stroke-linejoin="round"/><circle cx="15" cy="15" r="3.3" fill="none" stroke="#fff" stroke-width="2.1"/></svg>
<svg style="position:absolute;left:1332px;top:24px;" width="24" height="28" viewBox="0 0 24 28"><path fill="#fff" d="M12 1.6 c1.1 0 1.9.8 1.9 1.8 v.5 c3.3.9 5.2 3.7 5.2 7.2 v5.2 l2.9 3.6 c.5.7.1 1.6-.8 1.6 H2.8 c-.9 0-1.3-.9-.8-1.6 l2.9-3.6 v-5.2 c0-3.5 1.9-6.3 5.2-7.2 v-.5 c0-1 .8-1.8 1.9-1.8z"/><path fill="#fff" d="M8.9 23.4 h6.2 c-.3 1.6-1.5 2.7-3.1 2.7 s-2.8-1.1-3.1-2.7z"/></svg>
<div style="position:absolute;left:1383.6px;top:17.3px;width:43.5px;height:43.5px;background:#fff;border-radius:50%"></div>
<span class="t" style="left:1397px;top:29px;font:400 23px/1 'Liberation Sans',sans-serif;color:#007bff;transform:translateX(0.80px) scaleX(0.8590);">M</span>
</div>
</div></body></html>
